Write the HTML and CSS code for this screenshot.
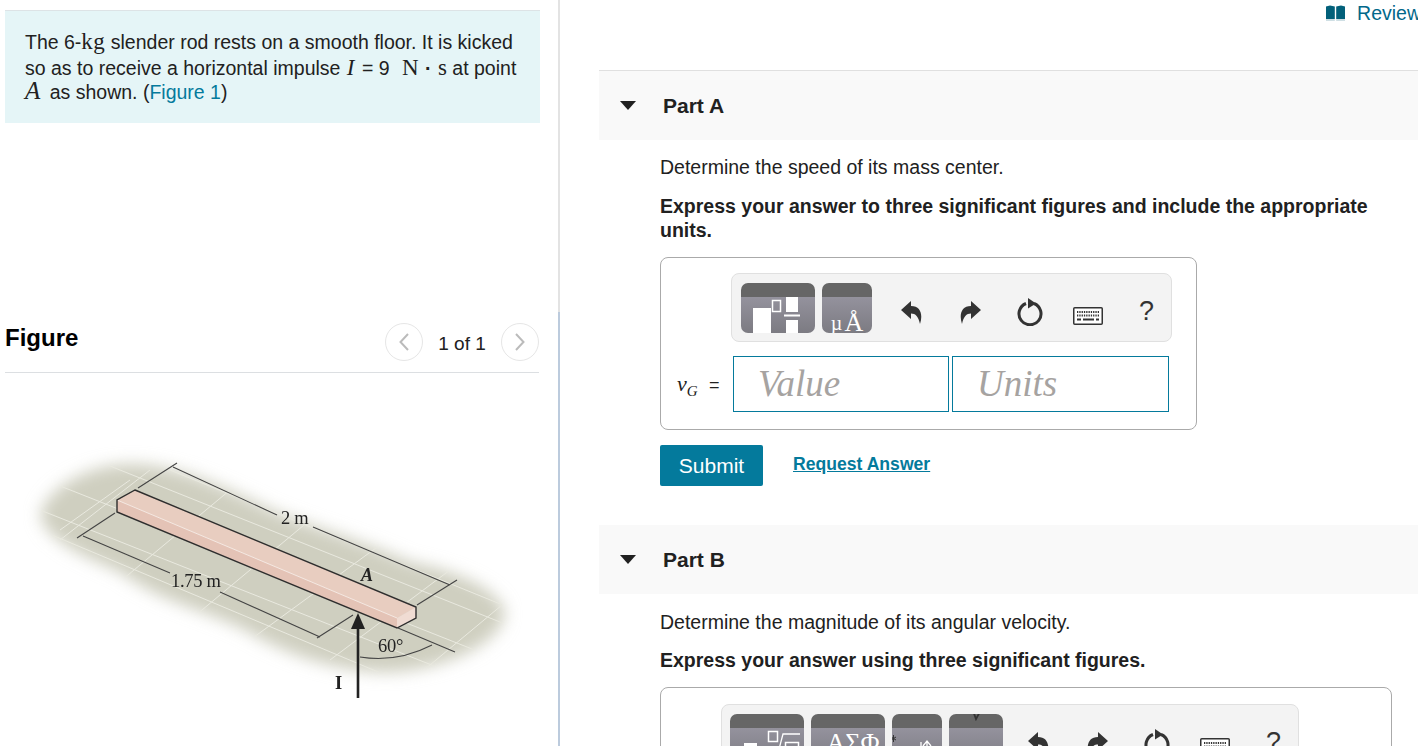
FILE: index.html
```html
<!DOCTYPE html>
<html lang="en">
<head>
<meta charset="utf-8">
<title>Slender rod problem</title>
<link rel="stylesheet" href="styles.css">
</head>
<body>
<svg class="defs" width="0" height="0" aria-hidden="true">
  <defs>
    <symbol id="i-undo" viewBox="0 0 21 23"><path d="M10 0L0 9l10 9v-5.500c4.500 0 7.500 3 9 10.500 3-9 1-18-9-18z"/></symbol>
    <symbol id="i-redo" viewBox="0 0 21 23"><path d="M11 0l10 9-10 9v-5.500C6.500 12.500 3.500 15.500 2 23-1 14 1 5 11 5z"/></symbol>
    <symbol id="i-reset" viewBox="0 0 28 28"><path d="M10 5.500a11 11 0 1 0 8 0" fill="none" stroke="currentColor" stroke-width="3"/><path d="M12 0l8 5.500-8 5z"/></symbol>
    <symbol id="i-keys" viewBox="0 0 30 18">
      <rect x=".75" y=".75" width="28.500" height="16.500" rx="1" fill="#fff" stroke="currentColor" stroke-width="1.500"/>
      <path d="M4 5h22M4 8.500h22" stroke="currentColor" stroke-width="1.800" stroke-dasharray="1.300 1"/>
      <path d="M4 12.500h4M10 12.500h11M23 12.500h3" stroke="currentColor" stroke-width="2"/>
    </symbol>
  </defs>
</svg>
<main class="page">
  <section class="left">
    <div class="problem">
      <p>The 6-<span class="rm kg">kg</span> slender rod rests on a smooth floor. It is kicked so as to receive a horizontal impulse <i class="mi tall">I</i> = 9 <span class="rm unit">N</span> <b class="dot">·</b> <span class="rm">s</span> at point <i class="mi big">A</i> as shown. (<a class="link" href="#fig">Figure 1</a>)</p>
    </div>
    <div class="fig-head" id="fig">
      <h2>Figure</h2>
      <div class="pager">
        <span class="round"><svg width="12" height="20" viewBox="0 0 12 20"><path d="M10 2L2.500 10 10 18" fill="none" stroke="#bbb" stroke-width="2"/></svg></span>
        <span class="count">1 of 1</span>
        <span class="round"><svg width="12" height="20" viewBox="0 0 12 20"><path d="M2 2l7.500 8L2 18" fill="none" stroke="#bbb" stroke-width="2"/></svg></span>
      </div>
    </div>
    <svg class="figure" width="540" height="300" viewBox="0 440 540 300" role="img" aria-label="Slender rod on floor with impulse I at point A">
      <defs>
        <filter id="soft" x="-10%" y="-20%" width="120%" height="140%"><feGaussianBlur stdDeviation="8"/></filter>
        <filter id="soft2"><feGaussianBlur stdDeviation="0.500"/></filter>
        <filter id="soft3"><feGaussianBlur stdDeviation="0.300"/></filter>
        <clipPath id="floor"><path d="M40 515C48 485 95 462 135 464C180 466 225 487 262 505C300 524 350 535 410 562C455 570 500 590 505 612C505 640 450 668 395 672C340 674 285 654 245 630C200 608 165 604 120 572C85 557 45 540 40 515z"/></clipPath>
      </defs>
      <path filter="url(#soft)" fill="#cfcfc0" d="M40 515C48 485 95 462 135 464C180 466 225 487 262 505C300 524 350 535 410 562C455 570 500 590 505 612C505 640 450 668 395 672C340 674 285 654 245 630C200 608 165 604 120 572C85 557 45 540 40 515z"/>
      <g clip-path="url(#floor)" stroke="#e9e9df" stroke-width="1" fill="none">
        <path d="M40 478L520 668M40 510L520 700M40 530L440 698M100 462L520 630M170 470L520 612M240 490L520 590"/>
        <path d="M60 540L150 470M110 590L230 490M190 620L310 520M250 640L380 545M330 660L450 570M400 690L520 590M130 480L60 530"/>
      </g>
      <g filter="url(#soft2)">
        <path d="M117 500L135 490 416 607 397 618z" fill="#e8cdc0"/>
        <path d="M117 500L397 618V628L117 512z" fill="#e4c3b6"/>
        <path d="M397 618L416 607V618L397 628z" fill="#f0dcd3"/>
        <path d="M117 500L397 618" stroke="#f5e8e2" stroke-width="1"/>
        <path d="M135 490L416 607V618L397 628 117 512V500z" fill="none" stroke="#2e2e2e" stroke-width="1.400"/>
        <g fill="none" stroke="#444" stroke-width="1.100">
          <path d="M138 488L177 463M173 467L277 515M313 527L450 585M417 605L457 580"/>
          <path d="M115 513L77 538M83 536L170 573M220 592L320 637M317 638L353 615"/>
          <path d="M398 628L455 652M360 657Q397 663 432 645"/>
        </g>
        <path d="M358 698V625" stroke="#222" stroke-width="2.600"/>
        <path d="M358 613L365 629H351z" fill="#222"/>
      </g>
      <g class="fig-text" filter="url(#soft3)">
        <text x="281" y="524">2 m</text>
        <text x="171" y="587">1.75 m</text>
        <text x="361" y="581" class="fig-a">A</text>
        <text x="378" y="652">60°</text>
        <text x="335" y="689" class="fig-i">I</text>
      </g>
    </svg>
  </section>
  <div class="divider"></div>
  <section class="right">
    <div class="review-row">
      <a class="review" href="#review">
        <svg width="19" height="16" viewBox="0 0 19 16"><path d="M0 1.500L4 .5 8.800 1.500V14H0zM10.200 1.500L15 .5 19 1.500V14h-8.800z" fill="#02607a"/><path d="M0 15h8.800M10.200 15H19" stroke="#9fbfca"/></svg>
        <span>Review</span>
      </a>
    </div>

    <article class="part first">
      <header class="part-head"><span class="caret"></span><h3>Part A</h3></header>
      <div class="part-body">
        <p class="q">Determine the speed of its mass center.</p>
        <p class="q strong">Express your answer to three significant figures and include the appropriate units.</p>
        <div class="answer answer-a">
          <div class="toolbar tb-a">
            <span class="tool w74">
              <svg width="74" height="36" viewBox="0 0 74 36">
                <path d="M12 11h18v25H12z" fill="#fff"/>
                <rect x="31.500" y="3.500" width="8" height="11" fill="none" stroke="#fff" stroke-width="1.500"/>
                <path d="M45 0h12v15H45zM45 23h12v13H45z" fill="#fff"/>
                <path d="M43 18.500h16" stroke="#fff" stroke-width="2"/>
              </svg>
            </span>
            <span class="tool w50 tool-units"><span class="mu">µ</span><span class="ang">Å</span></span>
            <span class="cell first-cell"><svg class="ic" width="21" height="23"><use href="#i-undo"/></svg></span>
            <span class="cell"><svg class="ic" width="21" height="23"><use href="#i-redo"/></svg></span>
            <span class="cell"><svg class="ic" width="28" height="28"><use href="#i-reset"/></svg></span>
            <span class="cell"><svg class="ic keys" width="30" height="18"><use href="#i-keys"/></svg></span>
            <span class="cell help">?</span>
          </div>
          <div class="entry">
            <span class="var"><i>v</i><sub>G</sub> <em>=</em></span>
            <span class="field field-value">Value</span>
            <span class="field">Units</span>
          </div>
        </div>
        <div class="actions">
          <button class="submit" type="button">Submit</button>
          <a class="request" href="#answer">Request Answer</a>
        </div>
      </div>
    </article>

    <article class="part second">
      <header class="part-head"><span class="caret"></span><h3>Part B</h3></header>
      <div class="part-body">
        <p class="q q-tight">Determine the magnitude of its angular velocity.</p>
        <p class="q strong">Express your answer using three significant figures.</p>
        <div class="answer answer-b">
          <div class="toolbar tb-b">
            <span class="tool w74">
              <svg width="74" height="36" viewBox="0 0 74 36">
                <path d="M14 15h13v21H14z" fill="#fff"/>
                <rect x="38.500" y="3.500" width="9" height="10" fill="none" stroke="#fff" stroke-width="1.500"/>
                <path d="M45 20l3 5 5-19h17" fill="none" stroke="#fff" stroke-width="1.300"/>
                <rect x="55.500" y="14.500" width="13" height="14" fill="none" stroke="#fff" stroke-width="1.500"/>
              </svg>
            </span>
            <span class="tool w74 tool-greek">ΑΣΦ</span>
            <span class="tool w50">
              <svg width="50" height="36" viewBox="0 0 50 36"><path d="M1.500 7v7M-1 9l5 3M4 9l-5 3" stroke="#333" stroke-width="1"/><path d="M35 14v22M31 18l4-5 4 5M29 14v18" fill="none" stroke="#fff" stroke-width="1.300"/></svg>
            </span>
            <span class="tool w54 tool-vec"><svg class="vec-mark" width="54" height="10" viewBox="0 0 54 10"><path d="M23 -6l4 11 6-11" fill="none" stroke="#333" stroke-width="1.800"/></svg><span>vec</span></span>
            <span class="cell first-cell"><svg class="ic" width="21" height="23"><use href="#i-undo"/></svg></span>
            <span class="cell"><svg class="ic" width="21" height="23"><use href="#i-redo"/></svg></span>
            <span class="cell"><svg class="ic" width="28" height="28"><use href="#i-reset"/></svg></span>
            <span class="cell"><svg class="ic keys" width="30" height="18"><use href="#i-keys"/></svg></span>
            <span class="cell help">?</span>
          </div>
        </div>
      </div>
    </article>
  </section>
</main>
</body>
</html>
```
FILE: styles.css
```css
* { box-sizing: border-box; }
html, body { margin: 0; height: 746px; overflow: hidden; background: #fff; }
body { font-family: "Liberation Sans", Arial, sans-serif; font-size: 19.5px; line-height: 24px; color: #212121; }
.defs { position: absolute; }
p, h2, h3 { margin: 0; }
a { text-decoration: none; }

.page { display: flex; width: 1421px; height: 746px; }

.left { width: 558px; flex: none; padding: 10px 18px 0 5px; }
.problem { height: 113px; background: #e5f5f7; border-top: 1px solid #dde3e6; padding: 19px 20px 0 20px; }
.rm { font-family: "Liberation Serif", serif; font-size: 23px; line-height: 0; }
.kg { letter-spacing: .5px; }
.unit { margin-left: 7px; }
.mi { font-family: "Liberation Serif", serif; font-size: 23px; line-height: 0; }
.tall { display: inline-block; line-height: 24px; padding: 2px 2px 0 1px; }
.big { font-size: 25px; margin-right: 4px; }
.dot { margin: 0 1px; }
.link { color: #047a9c; }
.fig-head { display: flex; align-items: center; justify-content: space-between; height: 54px; margin-top: 196px; border-bottom: 1px solid #dcdfe2; padding-bottom: 7px; width: 534px; }
.fig-head h2 { font-size: 24px; font-weight: 700; color: #000; margin-top: -8px; }
.pager { display: flex; align-items: center; }
.round { width: 38px; height: 38px; border: 1px solid #e6e6e6; border-radius: 50%; display: flex; align-items: center; justify-content: center; }
.count { width: 78px; text-align: center; padding-top: 3px; font-size: 19px; }
.figure { display: block; margin: 67px 0 0 -5px; }
.fig-text text { font-family: "Liberation Serif", serif; font-size: 18.500px; letter-spacing: -.3px; fill: #222; }
.fig-text .fig-a { font-style: italic; font-weight: 700; font-size: 18px; }
.fig-text .fig-i { font-weight: 700; }

.divider { width: 2px; flex: none; background: linear-gradient(#e3e3e3 0, #e3e3e3 312px, #bccbdd 312px, #bccbdd 100%); }

.right { flex: none; width: 861px; padding-left: 39px; }
.review-row { height: 70px; display: flex; justify-content: flex-end; align-items: flex-start; padding-top: 1px; }
.review { display: flex; align-items: center; gap: 12px; color: #02688a; }
.part-head { display: flex; align-items: center; height: 69px; background: #f9f9f9; padding-left: 21px; }
.first .part-head { height: 70px; border-top: 1px solid #e0e0e0; }
.caret { width: 0; height: 0; border-left: 8px solid transparent; border-right: 8px solid transparent; border-top: 9px solid #212121; margin-top: -1px; }
.part-head h3 { font-size: 21px; font-weight: 700; margin-left: 27px; }
.part-body { padding: 15px 0 0 61px; }
.second .part-body { padding-top: 16px; }
.q { width: 732px; margin-bottom: 15px; }
.q-tight { margin-bottom: 14px; }
.strong { font-weight: 700; }

.answer { border: 1px solid #aaa; border-radius: 8px; }
.answer-a { width: 537px; height: 173px; padding: 15px 0 0 70px; }
.answer-b { width: 732px; height: 200px; padding: 16px 0 0 60px; }
.toolbar { display: flex; align-items: flex-start; background: #f3f3f3; border: 1px solid #e0e0e0; border-radius: 8px; height: 69px; padding: 9px 0 0 9px; gap: 7px; }
.tb-a { width: 441px; }
.tb-b { width: 578px; padding-left: 8px; }
.tool { flex: none; position: relative; height: 50px; padding-top: 14px; border-radius: 7px; overflow: hidden; background: linear-gradient(#666 0, #666 14px, #94929d 14px, #7c7b82 100%); color: #fff; font-family: "Liberation Serif", serif; }
.tool svg { display: block; }
.w74 { width: 74px; }
.w50 { width: 50px; }
.w54 { width: 54px; }
.tool-units { display: flex; align-items: flex-end; justify-content: center; gap: 2px; line-height: 20px; }
.mu { font-size: 20px; }
.ang { font-size: 26px; }
.tool-greek { text-align: center; font-size: 26px; line-height: 28px; padding: 15px 0 0 10px; }
.tool-vec { text-align: center; font-size: 22px; line-height: 26px; padding: 22px 0 0 6px; }
.vec-mark { position: absolute; top: 0; left: 0; }
.cell { flex: none; width: 59px; margin-left: -7px; height: 50px; display: flex; align-items: center; justify-content: center; color: #333; padding-top: 8px; }
.first-cell { margin-left: 3px; }
.tb-b .first-cell { margin-left: -1px; }
.ic { fill: currentColor; color: #333; }
.keys { margin: 8px 2px 0 0; }
.help { font-size: 27px; padding-top: 6px; padding-right: 2px; }

.entry { display: flex; align-items: center; margin: 14px 0 0 -70px; padding-left: 16px; }
.var { width: 56px; font-family: "Liberation Serif", serif; font-size: 22px; white-space: nowrap; }
.var sub { font-style: italic; font-size: 15px; line-height: 0; }
.var em { font-family: "Liberation Sans", sans-serif; font-style: normal; font-size: 18px; margin-left: 6px; }
.field { width: 217px; height: 56px; border: 1px solid #047a9c; padding-left: 24px; font-family: "Liberation Serif", serif; font-style: italic; font-size: 37px; line-height: 53px; color: #a6a3a1; }
.field-value { width: 216px; margin-right: 3px; }

.actions { display: flex; align-items: flex-start; margin-top: 15px; margin-bottom: 39px; }
.submit { width: 103px; height: 41px; background: #047a9c; color: #fff; border: 0; border-radius: 2px; font: 21px "Liberation Sans", sans-serif; }
.request { margin: 7px 0 0 30px; font-size: 17.600px; font-weight: 700; color: #047a9c; text-decoration: underline; }
```
